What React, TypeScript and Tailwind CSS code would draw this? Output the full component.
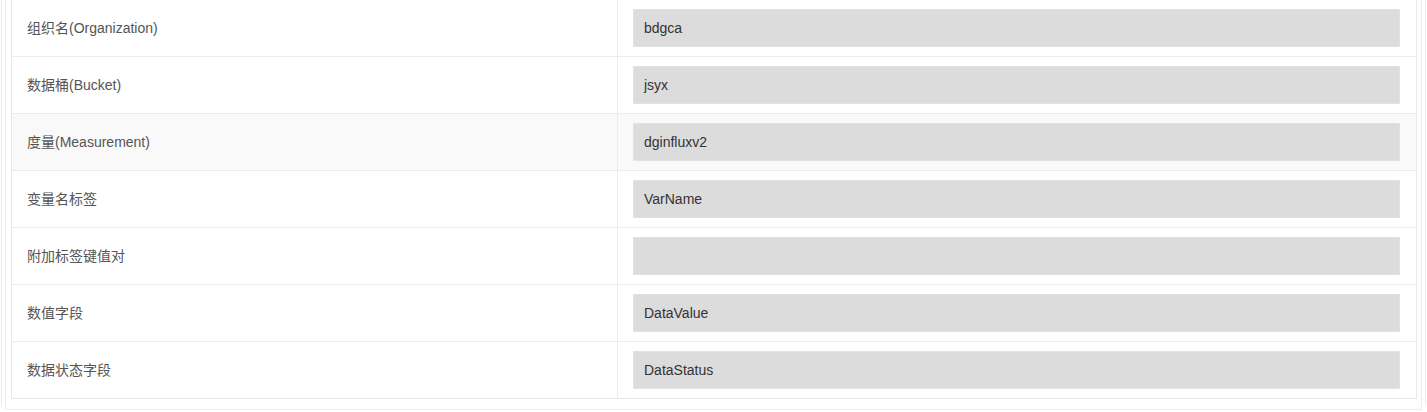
import React from "react";

const rows: { label: string; value: string }[] = [
  { label: "组织名(Organization)", value: "bdgca" },
  { label: "数据桶(Bucket)", value: "jsyx" },
  { label: "度量(Measurement)", value: "dginfluxv2" },
  { label: "变量名标签", value: "VarName" },
  { label: "附加标签键值对", value: "" },
  { label: "数值字段", value: "DataValue" },
  { label: "数据状态字段", value: "DataStatus" },
];

export default function App() {
  return (
    <div
      className="w-[1427px] h-[412px] overflow-hidden bg-white"
      style={{ fontFamily: '"Liberation Sans", "Noto Sans CJK SC", Arial, sans-serif' }}
    >
      <div className="ml-[1px] w-[1425px] h-full border-x border-[#ececec]">
        <div className="ml-[3px] w-[1417px] mt-[-7px] border border-[#ececec] pt-[5px] pl-[5px] pr-[4px] pb-[10px]">
          <div className="border border-[#e8e8e8]">
            {rows.map((r, i) => (
              <div
                key={i}
                className={`flex ${i < rows.length - 1 ? "border-b border-[#ececec]" : ""} ${
                  i === 2 ? "bg-[#f9f9f9]" : "bg-white"
                }`}
              >
                <div className="w-[606px] shrink-0 border-r border-[#ececec] pl-[15px] flex items-center text-[14px] text-[#555]">
                  {r.label}
                </div>
                <div className="flex-1 pl-[15px] pr-[16px] py-[9px]">
                  <div className="h-[38px] bg-[#dcdcdc] border border-[#e2e2e2] pl-[10px] flex items-center text-[14px] text-[#333]">
                    {r.value}
                  </div>
                </div>
              </div>
            ))}
          </div>
        </div>
      </div>
    </div>
  );
}
